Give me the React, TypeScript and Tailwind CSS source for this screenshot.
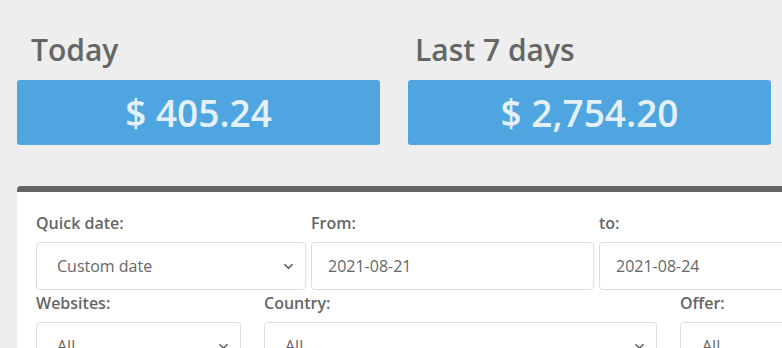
import React from "react"

function Chevron() {
  return (
    <svg width="11" height="7" viewBox="0 0 11 7" fill="none" className="shrink-0">
      <path d="M1.5 1.2l4 4 4-4" stroke="#555" strokeWidth="1.5" />
    </svg>
  )
}

function SelectBox({ value, w, pl = "pl-[20px]" }: { value: string; w: string; pl?: string }) {
  return (
    <div className={`${w} h-[48px] flex items-center justify-between border border-[#dddddd] rounded-[4px] bg-white ${pl} pr-[11px]`}>
      <span className="text-[16px] text-[#666666]">{value}</span>
      <Chevron />
    </div>
  )
}

function Field({ label, children, w }: { label: string; children: React.ReactNode; w: string }) {
  return (
    <div className={`${w} shrink-0`}>
      <div className="text-[16px] leading-[22px] font-semibold text-[#666666] mb-[8px]">{label}</div>
      {children}
    </div>
  )
}

export default function App() {
  return (
    <div
      className="h-[348px] w-[782px] overflow-hidden bg-[#eeeeee]"
      style={{ fontFamily: '"Open Sans", "Noto Sans", sans-serif' }}
    >
      {/* Stat cards */}
      <div className="flex gap-[28px] pl-[17px] pt-[30px]">
        <div className="w-[363px]">
          <h2 className="pl-[14px] text-[30px] leading-[40px] font-semibold text-[#666666] mb-[10px]">Today</h2>
          <div className="h-[65px] rounded-[3px] bg-[#4fa5e0] flex items-center justify-center text-[37px] font-semibold text-[#e4f1fc]">
            $ 405.24
          </div>
        </div>
        <div className="w-[363px]">
          <h2 className="pl-[7px] text-[30px] leading-[40px] font-semibold text-[#666666] mb-[10px]">Last 7 days</h2>
          <div className="h-[65px] rounded-[3px] bg-[#4fa5e0] flex items-center justify-center text-[37px] font-semibold text-[#e4f1fc]">
            $ 2,754.20
          </div>
        </div>
      </div>

      {/* Filter panel */}
      <div className="ml-[17px] mt-[41px] w-[800px] bg-white border-t-[6px] border-[#666666] rounded-tl-[4px] pl-[19px] pt-[20px]">
        <div className="flex gap-[5px]">
          <Field label="Quick date:" w="w-[270px]">
            <SelectBox value="Custom date" w="w-[270px]" />
          </Field>
          <Field label="From:" w="w-[283px]">
            <div className="h-[48px] flex items-center border border-[#dddddd] rounded-[4px] pl-[16px] text-[16px] text-[#666666]">
              2021-08-21
            </div>
          </Field>
          <Field label="to:" w="w-[283px]">
            <div className="h-[48px] flex items-center border border-[#dddddd] rounded-[4px] pl-[16px] text-[16px] text-[#666666]">
              2021-08-24
            </div>
          </Field>
        </div>
        <div className="flex gap-[23px] mt-[2px]">
          <Field label="Websites:" w="w-[205px]">
            <SelectBox value="All" w="w-[205px]" />
          </Field>
          <Field label="Country:" w="w-[393px]">
            <SelectBox value="All" w="w-[393px]" />
          </Field>
          <Field label="Offer:" w="w-[200px]">
            <SelectBox value="All" w="w-[200px]" pl="pl-[21px]" />
          </Field>
        </div>
      </div>
    </div>
  )
}
